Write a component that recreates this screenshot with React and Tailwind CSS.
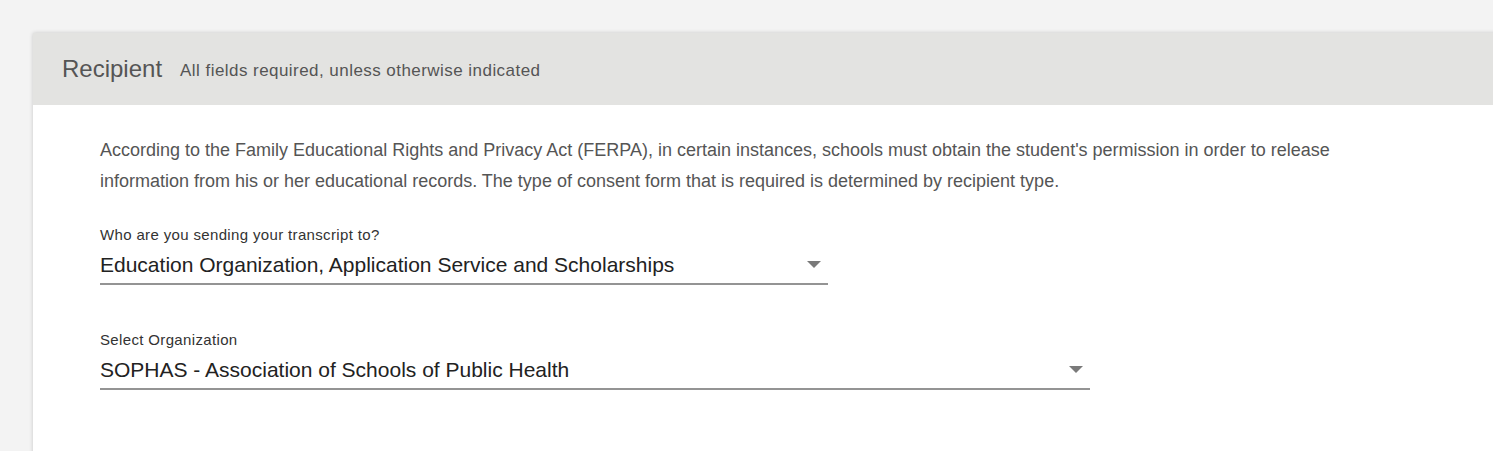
import React from 'react'

const Caret = () => (
  <svg width="14" height="7" viewBox="0 0 14 7" className="shrink-0">
    <path d="M0 0 L14 0 L7 7 Z" fill="#7a7a7a" />
  </svg>
)

function SelectField({ label, value, width }) {
  return (
    <div className={width}>
      <label className="block text-[15px] leading-[17px] tracking-[0.35px] text-[#333]">{label}</label>
      <div className="mt-[9px] flex items-center justify-between border-b-2 border-[#949494] pb-[6px] pr-[7px]">
        <span className="text-[21px] leading-[25px] text-[#222]">{value}</span>
        <Caret />
      </div>
    </div>
  )
}

export default function App() {
  return (
    <div
      className="h-[451px] w-full overflow-hidden bg-[#f3f3f3] pl-[33px] pt-[33px]"
      style={{ fontFamily: '"Liberation Sans", Arial, sans-serif' }}
    >
      <div className="w-[1480px] bg-white shadow-[0_0_4px_rgba(0,0,0,0.18)]">
        <div className="flex h-[72px] items-center bg-[#e3e3e1] px-[29px]">
          <h2 className="text-[24px] text-[#555]">Recipient</h2>
          <span className="ml-[18px] mt-[3px] text-[17px] tracking-[0.45px] text-[#555]">All fields required, unless otherwise indicated</span>
        </div>
        <div className="pl-[67px] pt-[30px] pb-[120px]">
          <p className="w-[1250px] text-[18px] leading-[31px] text-[#555]">
            According to the Family Educational Rights and Privacy Act (FERPA), in certain instances, schools must obtain the student's permission in order to release information from his or her educational records. The type of consent form that is required is determined by recipient type.
          </p>
          <div className="mt-[29px] flex flex-col gap-[46px]">
            <SelectField
              label="Who are you sending your transcript to?"
              value="Education Organization, Application Service and Scholarships"
              width="w-[728px]"
            />
            <SelectField
              label="Select Organization"
              value="SOPHAS - Association of Schools of Public Health"
              width="w-[990px]"
            />
          </div>
        </div>
      </div>
    </div>
  )
}
